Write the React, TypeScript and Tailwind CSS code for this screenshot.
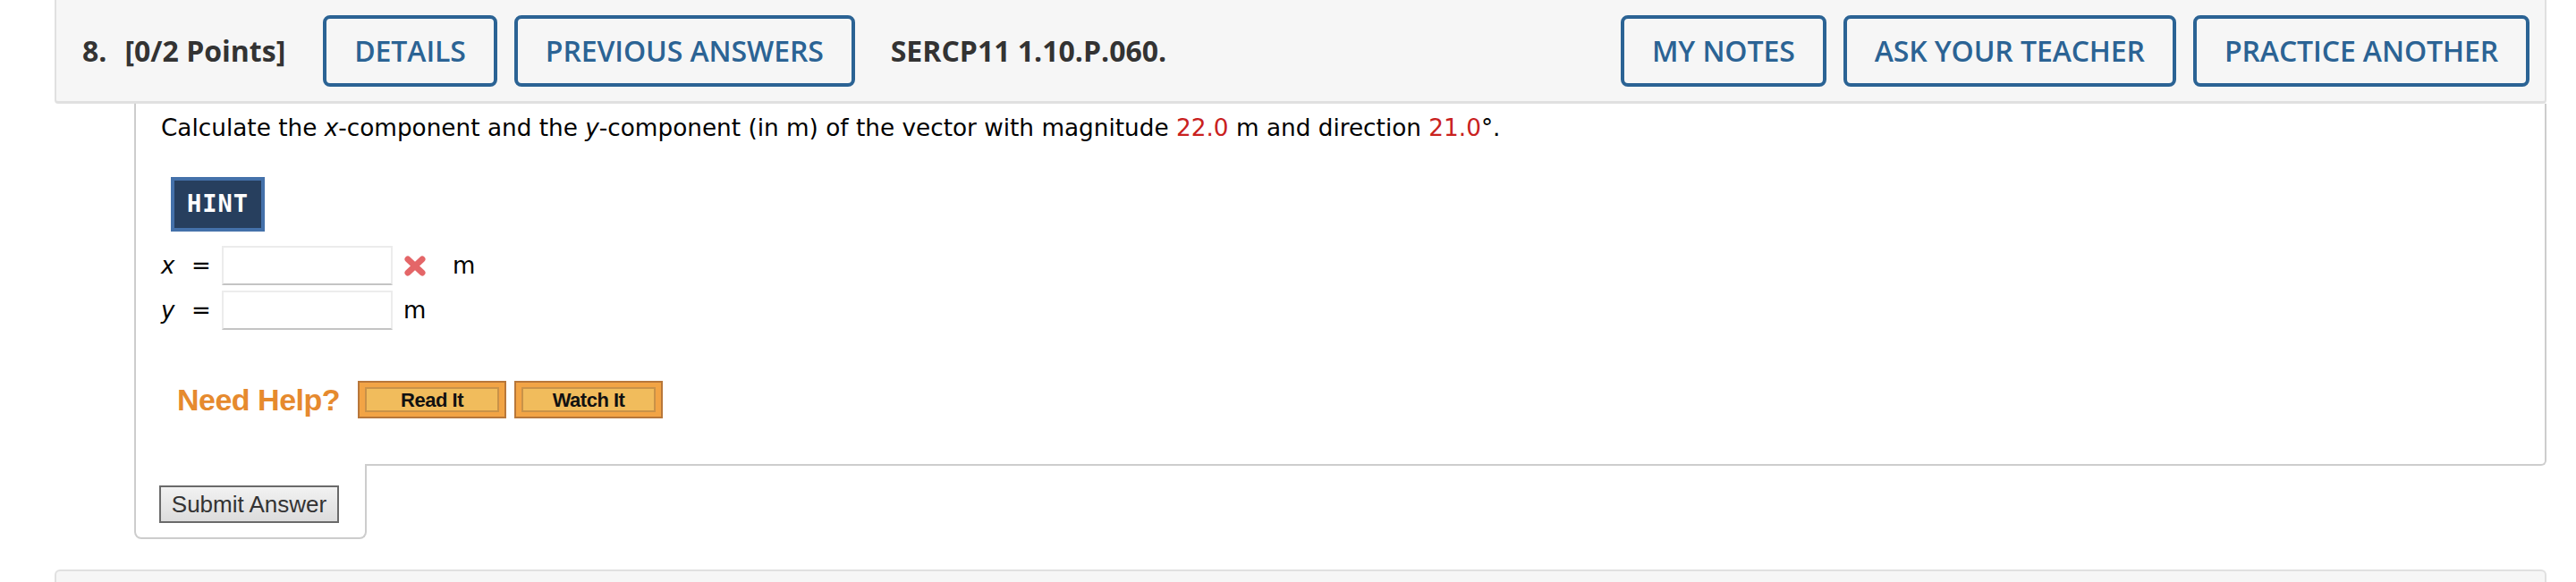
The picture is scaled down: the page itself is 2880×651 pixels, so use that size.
export default function App() {
  const navBtn =
    "flex items-center h-[80px] px-[31px] border-4 border-[#2b6394] rounded-[8px] text-[#2b6394] bg-[#f6f6f6] font-semibold tracking-[-0.1px] whitespace-nowrap"

  return (
    <div className="w-[2880px] h-[651px] bg-white overflow-hidden">
      <div className="ml-[61px] w-[2786px]">
        {/* question header */}
        <div className="flex items-center h-[116px] bg-[#f6f6f6] border-x-2 border-b-[3px] border-[#e0e0e0] rounded-b-[4px] pl-[29px] pr-[17px] font-['Open_Sans',sans-serif] text-[32px]">
          <span className="font-bold text-[#333]">8.</span>
          <span className="font-bold text-[#333] ml-[20px]">[0/2 Points]</span>
          <div className="flex gap-[19px] ml-[42px]">
            <div className={navBtn}>DETAILS</div>
            <div className={navBtn}>PREVIOUS ANSWERS</div>
          </div>
          <span className="font-bold text-[#333] ml-[40px]">SERCP11 1.10.P.060.</span>
          <div className="flex gap-[19px] ml-auto">
            <div className={navBtn}>MY NOTES</div>
            <div className={navBtn}>ASK YOUR TEACHER</div>
            <div className={navBtn}>PRACTICE ANOTHER</div>
          </div>
        </div>

        {/* question body */}
        <div className="ml-[89px] border-x-2 border-b-2 border-[#cdcdcd] rounded-br-[6px] pl-[28px] pt-[7px] pb-[51px] font-['DejaVu_Sans',sans-serif] text-black">
          <p className="text-[26.3px] leading-[40px]">
            Calculate the <i>x</i>-component and the <i>y</i>-component (in m) of the vector with magnitude{" "}
            <span className="text-[#c9211e]">22.0</span> m and direction <span className="text-[#c9211e]">21.0</span>°.
          </p>

          <div className="mt-[35px] ml-[11px] w-[105px] h-[61px] border-4 border-[#4471aa] bg-[#273f5e] flex items-center justify-center">
            <span className="font-['DejaVu_Sans_Mono',monospace] font-bold text-[27px] tracking-[1px] text-white">HINT</span>
          </div>

          <div className="mt-[16px] flex items-center h-[44px] text-[26px]">
            <span className="w-[34px] italic">x</span>
            <span className="w-[34px]">=</span>
            <div className="w-[191px] h-[44px] bg-white border-2 border-[#ececec] border-b-[#c4c4c4]" />
            <svg className="ml-[12px]" width="26" height="25" viewBox="0 0 26 25">
              <path d="M5 5 L21 20 M21 5 L5 20" stroke="#e46668" strokeWidth="7" strokeLinecap="round" />
            </svg>
            <span className="ml-[29px]">m</span>
          </div>
          <div className="mt-[6px] flex items-center h-[44px] text-[26px]">
            <span className="w-[34px] italic">y</span>
            <span className="w-[34px]">=</span>
            <div className="w-[191px] h-[44px] bg-white border-2 border-[#ececec] border-b-[#c4c4c4]" />
            <span className="ml-[12px]">m</span>
          </div>

          <div className="mt-[57px] ml-[18px] flex items-center h-[42px] font-['Liberation_Sans',Arial,sans-serif]">
            <span className="text-[34px] font-bold text-[#e68a2e] tracking-[-0.5px]">Need Help?</span>
            <div className="ml-[20px] flex gap-[9px]">
              {["Read It", "Watch It"].map((t) => (
                <div key={t} className="w-[166px] h-[42px] border-2 border-[#b8773a] bg-[#f2a445] p-[5px_6px]">
                  <div className="h-full border-2 border-[#c99248] bg-[#f1bc5c] flex items-center justify-center text-[22px] font-bold text-[#111] tracking-[-0.5px]">
                    {t}
                  </div>
                </div>
              ))}
            </div>
          </div>
        </div>

        {/* submit tab */}
        <div className="relative ml-[89px] -mt-[2px] w-[260px] bg-white border-x-2 border-b-2 border-[#cdcdcd] rounded-b-[8px] pt-[24px] pb-[16px] pl-[26px]">
          <div className="w-[201px] h-[42px] border-2 border-[#6a6a6a] bg-gradient-to-b from-[#f2f2f2] to-[#dcdcdc] flex items-center justify-center font-['Liberation_Sans',Arial,sans-serif] text-[26px] text-[#333]">
            Submit Answer
          </div>
        </div>

        {/* next question header */}
        <div className="mt-[34px] h-[40px] bg-[#f6f6f6] border-x-2 border-t-2 border-[#e0e0e0] rounded-t-[6px]" />
      </div>
    </div>
  )
}
